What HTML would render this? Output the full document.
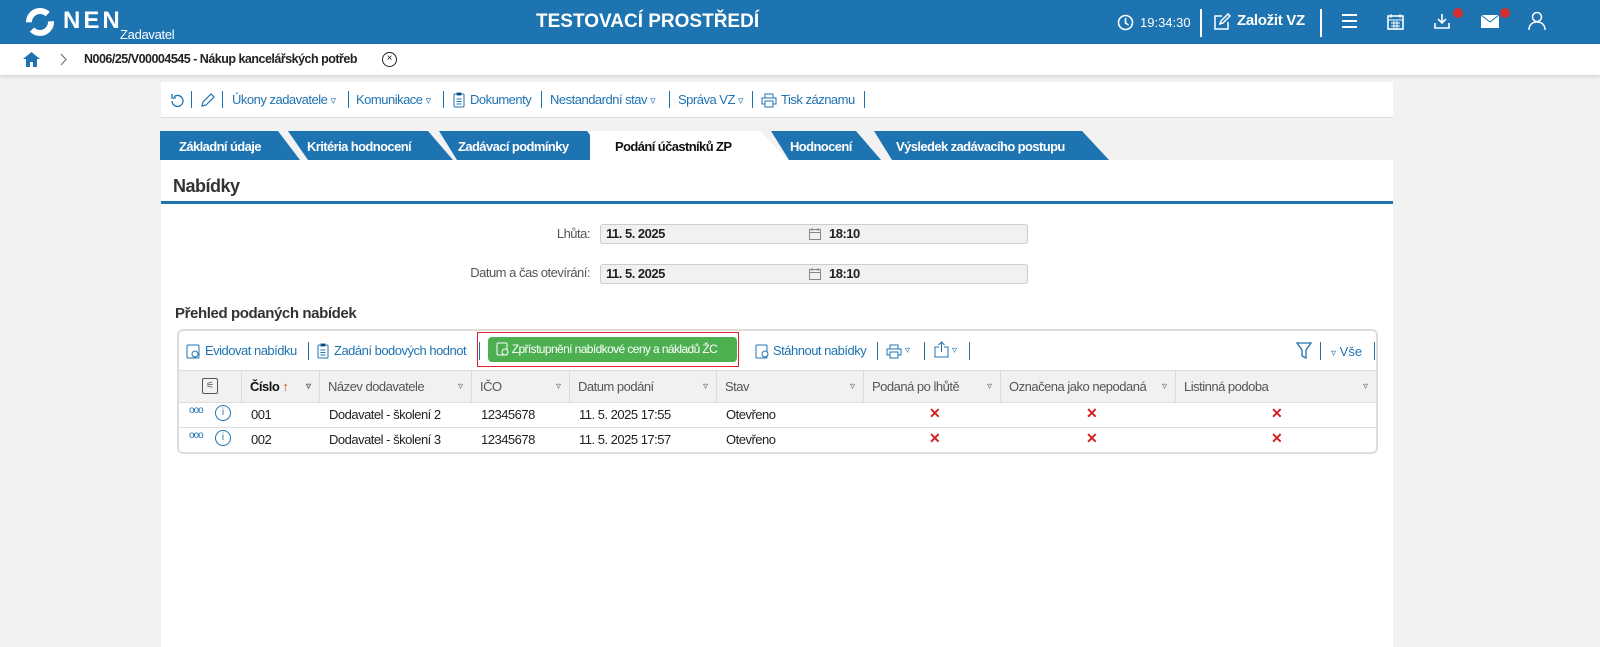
<!DOCTYPE html>
<html><head><meta charset="utf-8"><style>
*{box-sizing:border-box;margin:0;padding:0}
body{width:1600px;height:647px;overflow:hidden;background:#f2f2f2;font-family:"Liberation Sans",sans-serif;font-size:13px;color:#222;position:relative}
.abs{position:absolute}
.hdr{left:0;top:0;width:1600px;height:44px;background:#1e73b1;color:#fff}
.bc{left:0;top:44px;width:1600px;height:31px;background:#fff;box-shadow:0 2px 4px rgba(0,0,0,.12)}
.nar{letter-spacing:-0.5px}
.tb{left:161px;top:82px;width:1232px;height:36px;background:#fff;border-bottom:1px solid #ddd;color:#1e73b1;font-size:13px}
.tb span{position:absolute;top:10px;white-space:nowrap}
.sep{position:absolute;width:1px;height:17px;background:#1e73b1;top:91px}
.tab{position:absolute;top:131px;height:29px;color:#fff;font-weight:bold;font-size:13px;line-height:31px;letter-spacing:-0.6px;white-space:nowrap}
.tab svg{position:absolute;left:0;top:0}
.tab b{position:relative;padding-left:19px}
.main{left:161px;top:160px;width:1232px;height:487px;background:#fff}
.inp{position:absolute;left:600px;width:428px;height:20px;background:#f1f1f1;border:1px solid #ccc;border-radius:3px;font-weight:bold;font-size:13px;line-height:18px}
.lbl{position:absolute;color:#555;font-size:13px;text-align:right;width:300px}
.grid{left:177px;top:329px;width:1201px;height:125px;border:2px solid #ddd;border-radius:6px;background:#fff}
.th{position:absolute;top:371px;height:31px;line-height:31px;color:#555;font-size:13px;border-right:1px solid #ddd;background:#f1f1f1;padding-left:8px;white-space:nowrap}
.th i{position:absolute;right:8px;font-style:normal;font-size:10px;color:#666;letter-spacing:0}
.td{position:absolute;font-size:13px;color:#222;white-space:nowrap}
.x{position:absolute;color:#d32222;font-weight:bold;font-size:14px}
</style></head><body>
<div class="abs hdr">
 <svg class="abs" style="left:25px;top:7px" width="30" height="30" viewBox="0 0 30 30"><circle cx="15" cy="15" r="11" fill="none" stroke="#fff" stroke-width="6" stroke-dasharray="26 8"/></svg>
 <div class="abs" style="left:63px;top:7px;font-size:24px;font-weight:bold;letter-spacing:3px">NEN</div>
 <div class="abs" style="left:120px;top:27px;font-size:13px;letter-spacing:-.3px">Zadavatel</div>
 <div class="abs" style="left:536px;top:11px;font-size:19px;font-weight:bold">TESTOVACÍ PROSTŘEDÍ</div>
 <svg class="abs" style="left:1117px;top:14px" width="17" height="17"><circle cx="8.5" cy="8.5" r="7" fill="none" stroke="#fff" stroke-width="1.6"/><path d="M8.5 4v5l3 2" stroke="#fff" stroke-width="1.6" fill="none"/></svg>
 <div class="abs" style="left:1140px;top:15px;font-size:13px">19:34:30</div>
 <div class="abs" style="left:1200px;top:9px;width:2px;height:28px;background:#fff"></div>
 <svg class="abs" style="left:1213px;top:13px" width="18" height="18"><path d="M9 3H2v13h13V9M7 11l1-3 7-7 2 2-7 7z" stroke="#fff" stroke-width="1.5" fill="none"/></svg>
 <div class="abs" style="left:1237px;top:12px;font-size:15px;font-weight:bold;letter-spacing:-.3px">Založit VZ</div>
 <div class="abs" style="left:1320px;top:9px;width:2px;height:28px;background:#fff"></div>
 <div class="abs" style="left:1342px;top:14px;width:15px;height:2px;background:#fff;box-shadow:0 6px #fff,0 12px #fff"></div>
 <svg class="abs" style="left:1387px;top:13px" width="17" height="18"><rect x="1" y="3" width="15" height="13" fill="none" stroke="#fff" stroke-width="1.6"/><path d="M4 1v4M13 1v4M1 7h15M4 10h9M4 13h9M7 8v7M10 8v7" stroke="#fff"/></svg>
 <svg class="abs" style="left:1433px;top:12px" width="18" height="18"><path d="M9 2v9M5 7l4 4 4-4M2 11v5h14v-5" stroke="#fff" stroke-width="1.6" fill="none"/></svg>
 <div class="abs" style="left:1453px;top:8px;width:10px;height:10px;border-radius:50%;background:#d32f2f"></div>
 <svg class="abs" style="left:1481px;top:15px" width="18" height="13"><rect width="18" height="13" fill="#fff"/><path d="M0 0l9 7 9-7" stroke="#1e73b1" fill="none"/></svg>
 <div class="abs" style="left:1500px;top:8px;width:10px;height:10px;border-radius:50%;background:#d32f2f"></div>
 <svg class="abs" style="left:1528px;top:11px" width="18" height="20"><circle cx="9" cy="6" r="4.5" fill="none" stroke="#fff" stroke-width="1.5"/><path d="M1 19c0-5 3-8 8-8s8 3 8 8" fill="none" stroke="#fff" stroke-width="1.5"/></svg>
</div>
<div class="abs bc">
 <svg class="abs" style="left:23px;top:7px" width="17" height="16"><path d="M8.5 1L0 8h3v8h4v-5h3v5h4V8h3z" fill="#1e73b1"/></svg>
 <svg class="abs" style="left:60px;top:9px" width="8" height="13"><path d="M1 1l5 5.5L1 12" stroke="#777" fill="none" stroke-width="1.2"/></svg>
 <div class="abs" style="left:84px;top:8px;font-weight:bold;font-size:12.5px;letter-spacing:-.5px;white-space:nowrap">N006/25/V00004545 - Nákup kancelářských potřeb</div>
 <div class="abs" style="left:382px;top:8px;width:15px;height:15px;border:1.5px solid #222;border-radius:50%;font-size:10px;line-height:12px;text-align:center">×</div>
</div>
<div class="abs tb nar">
 <svg style="position:absolute;left:8px;top:11px" width="16" height="16"><path d="M3 8a5.5 5.5 0 1 0 2-4.3M3 1v4h4" stroke="#1e73b1" stroke-width="1.3" fill="none"/></svg>
 <svg style="position:absolute;left:39px;top:10px" width="16" height="16"><path d="M2 14l1-4 8-8 3 3-8 8z" stroke="#1e73b1" stroke-width="1.2" fill="none"/></svg>
 <span style="left:71px">Úkony zadavatele <small>▿</small></span>
 <span style="left:195px">Komunikace <small>▿</small></span>
 <svg style="position:absolute;left:292px;top:10px" width="12" height="16"><rect x="1" y="2" width="10" height="13" rx="1" stroke="#1e73b1" fill="none"/><path d="M4 1h4v2H4zM3.5 7h5M3.5 9.5h5M3.5 12h5" stroke="#1e73b1"/></svg>
 <span style="left:309px">Dokumenty</span>
 <span style="left:389px">Nestandardní stav <small>▿</small></span>
 <span style="left:517px">Správa VZ <small>▿</small></span>
 <svg style="position:absolute;left:600px;top:11px" width="16" height="15"><path d="M4 5V1h8v4M4 11H1V5h14v6h-3M4 8h8v6H4z" stroke="#1e73b1" fill="none"/></svg>
 <span style="left:620px">Tisk záznamu</span>
</div>
<div class="sep" style="left:191px"></div><div class="sep" style="left:222px"></div><div class="sep" style="left:348px"></div><div class="sep" style="left:443px"></div><div class="sep" style="left:541px"></div><div class="sep" style="left:669px"></div><div class="sep" style="left:752px"></div><div class="sep" style="left:864px"></div>

<div class="tab" style="left:160px;width:140px"><svg width="140" height="29"><path d="M0 0H118L140 29H0z" fill="#1e73b1"/></svg><b>Základní údaje</b></div>
<div class="tab" style="left:288px;width:165px"><svg width="165" height="29"><path d="M0 0H140L165 29H20z" fill="#1e73b1"/></svg><b>Kritéria hodnocení</b></div>
<div class="tab" style="left:439px;width:170px"><svg width="170" height="29"><path d="M0 0H148L170 29H18z" fill="#1e73b1"/></svg><b>Zadávací podmínky</b></div>
<div class="tab" style="left:590px;width:200px;color:#111"><svg width="200" height="29"><path d="M0 0H170L198 29H0z" fill="#fff"/></svg><b style="padding-left:25px">Podání účastníků ZP</b></div>
<div class="tab" style="left:771px;width:120px"><svg width="120" height="29"><path d="M0 0H85L110 29H18z" fill="#1e73b1"/></svg><b>Hodnocení</b></div>
<div class="tab" style="left:874px;width:240px"><svg width="240" height="29"><path d="M0 0H208L235 29H18z" fill="#1e73b1"/></svg><b style="padding-left:22px">Výsledek zadávacího postupu</b></div>

<div class="abs main">
 <div class="abs" style="left:12px;top:16px;font-size:18px;font-weight:bold;color:#333;letter-spacing:-.5px">Nabídky</div>
 <div class="abs" style="left:0;top:41px;width:1232px;height:3px;background:#1e73b1"></div>
</div>
<div class="lbl nar" style="left:290px;top:226px">Lhůta:</div>
<div class="lbl nar" style="left:290px;top:265px">Datum a čas otevírání:</div>
<div class="inp nar" style="top:224px"><span style="position:absolute;left:5px">11. 5. 2025</span><svg style="position:absolute;left:208px;top:3px" width="12" height="12"><rect x=".5" y="1.5" width="11" height="10" fill="none" stroke="#888"/><path d="M0 4.5h12M3 0v3M9 0v3" stroke="#888"/></svg><span style="position:absolute;left:228px">18:10</span></div>
<div class="inp nar" style="top:264px"><span style="position:absolute;left:5px">11. 5. 2025</span><svg style="position:absolute;left:208px;top:3px" width="12" height="12"><rect x=".5" y="1.5" width="11" height="10" fill="none" stroke="#888"/><path d="M0 4.5h12M3 0v3M9 0v3" stroke="#888"/></svg><span style="position:absolute;left:228px">18:10</span></div>
<div class="abs" style="left:175px;top:305px;font-size:15px;font-weight:bold;color:#333;letter-spacing:-.4px">Přehled podaných nabídek</div>

<div class="abs grid"></div>
<svg class="abs" style="left:186px;top:343px" width="14" height="16"><rect x="1" y="2" width="12" height="13" rx="1" stroke="#1e73b1" fill="none"/><circle cx="9" cy="11" r="3" stroke="#1e73b1" fill="#fff"/></svg>
<div class="abs nar" style="left:205px;top:343px;color:#1e73b1;font-size:13px;white-space:nowrap">Evidovat nabídku</div>
<div class="abs" style="left:308px;top:342px;width:1px;height:18px;background:#1e73b1"></div>
<svg class="abs" style="left:317px;top:343px" width="12" height="16"><rect x="1" y="2" width="10" height="13" rx="1" stroke="#1e73b1" fill="none"/><path d="M4 1h4v2H4zM3.5 7h5M3.5 9.5h5M3.5 12h5" stroke="#1e73b1"/></svg>
<div class="abs nar" style="left:334px;top:343px;color:#1e73b1;font-size:13px;white-space:nowrap">Zadání bodových hodnot</div>
<div class="abs" style="left:479px;top:342px;width:1px;height:18px;background:#1e73b1"></div>
<div class="abs" style="left:477px;top:332px;width:262px;height:35px;border:1px solid #e0202a"></div>
<div class="abs" style="left:488px;top:337px;width:249px;height:25px;background:#4caf50;border-radius:4px;color:#fff;font-size:12px;line-height:25px;padding-left:8px;white-space:nowrap;letter-spacing:-.6px;overflow:hidden"><svg style="vertical-align:-3px" width="13" height="15"><rect x="1" y="2" width="10" height="12" rx="1" stroke="#fff" fill="none"/><circle cx="9" cy="11" r="3" stroke="#fff" fill="#4caf50"/></svg> Zpřístupnění nabídkové ceny a nákladů ŽC</div>
<svg class="abs" style="left:755px;top:343px" width="14" height="16"><rect x="1" y="2" width="11" height="13" rx="1" stroke="#1e73b1" fill="none"/><circle cx="10" cy="11" r="3" stroke="#1e73b1" fill="#fff"/></svg>
<div class="abs nar" style="left:773px;top:343px;color:#1e73b1;font-size:13px;white-space:nowrap">Stáhnout nabídky</div>
<div class="abs" style="left:877px;top:342px;width:1px;height:18px;background:#1e73b1"></div>
<svg class="abs" style="left:886px;top:344px" width="16" height="15"><path d="M4 5V1h8v4M4 11H1V5h14v6h-3M4 8h8v6H4z" stroke="#1e73b1" fill="none"/></svg>
<div class="abs" style="left:905px;top:345px;color:#1e73b1;font-size:10px">▿</div>
<div class="abs" style="left:924px;top:342px;width:1px;height:18px;background:#1e73b1"></div>
<svg class="abs" style="left:934px;top:341px" width="15" height="17"><path d="M5 6H1v10h13V6h-4M7.5 11V1M4.5 4l3-3 3 3" stroke="#1e73b1" fill="none"/></svg>
<div class="abs" style="left:952px;top:345px;color:#1e73b1;font-size:10px">▿</div>
<div class="abs" style="left:969px;top:342px;width:1px;height:18px;background:#1e73b1"></div>
<svg class="abs" style="left:1296px;top:342px" width="16" height="17"><path d="M1 1h14l-5 7v8l-4-2V8z" fill="none" stroke="#1e73b1" stroke-width="1.3"/></svg>
<div class="abs" style="left:1320px;top:342px;width:1px;height:18px;background:#1e73b1"></div>
<div class="abs" style="left:1331px;top:344px;color:#1e73b1;font-size:13px"><span style="font-size:10px">▿</span> Vše</div>
<div class="abs" style="left:1374px;top:342px;width:1px;height:18px;background:#1e73b1"></div>

<div class="abs" style="left:179px;top:370px;width:1197px;height:1px;background:#ddd"></div>
<div class="th" style="left:179px;width:63px"><span style="position:absolute;left:23px;top:7px;width:16px;height:16px;border:1px solid #555;border-radius:2px;font-size:9px;line-height:13px;text-align:center">⚟</span></div>
<div class="th nar" style="left:242px;width:78px;color:#111;font-weight:bold">Číslo <span style="color:#c55a11;font-weight:normal">↑</span><i>▿</i></div>
<div class="th nar" style="left:320px;width:152px">Název dodavatele<i>▿</i></div>
<div class="th nar" style="left:472px;width:98px">IČO<i>▿</i></div>
<div class="th nar" style="left:570px;width:147px">Datum podání<i>▿</i></div>
<div class="th nar" style="left:717px;width:147px">Stav<i>▿</i></div>
<div class="th nar" style="left:864px;width:137px">Podaná po lhůtě<i>▿</i></div>
<div class="th nar" style="left:1001px;width:175px">Označena jako nepodaná<i>▿</i></div>
<div class="th nar" style="left:1176px;width:200px;border-right:0">Listinná podoba<i>▿</i></div>
<div class="abs" style="left:179px;top:402px;width:1197px;height:1px;background:#ddd"></div>
<div class="abs" style="left:179px;top:427px;width:1197px;height:1px;background:#ddd"></div>

<div class="td" style="left:189px;top:405px;color:#1e73b1;font-size:10px;letter-spacing:-1px">ooo</div>
<div class="abs" style="left:215px;top:405px;width:16px;height:16px;border:1.3px solid #1e73b1;border-radius:50%;color:#1e73b1;font-size:10px;text-align:center;line-height:13px">i</div>
<div class="td nar" style="left:251px;top:407px">001</div><div class="td nar" style="left:329px;top:407px">Dodavatel - školení 2</div><div class="td nar" style="left:481px;top:407px">12345678</div><div class="td nar" style="left:579px;top:407px">11. 5. 2025 17:55</div><div class="td nar" style="left:726px;top:407px">Otevřeno</div>
<div class="x" style="left:929px;top:405px">✕</div><div class="x" style="left:1086px;top:405px">✕</div><div class="x" style="left:1271px;top:405px">✕</div>

<div class="td" style="left:189px;top:430px;color:#1e73b1;font-size:10px;letter-spacing:-1px">ooo</div>
<div class="abs" style="left:215px;top:430px;width:16px;height:16px;border:1.3px solid #1e73b1;border-radius:50%;color:#1e73b1;font-size:10px;text-align:center;line-height:13px">i</div>
<div class="td nar" style="left:251px;top:432px">002</div><div class="td nar" style="left:329px;top:432px">Dodavatel - školení 3</div><div class="td nar" style="left:481px;top:432px">12345678</div><div class="td nar" style="left:579px;top:432px">11. 5. 2025 17:57</div><div class="td nar" style="left:726px;top:432px">Otevřeno</div>
<div class="x" style="left:929px;top:430px">✕</div><div class="x" style="left:1086px;top:430px">✕</div><div class="x" style="left:1271px;top:430px">✕</div>
</body></html>
